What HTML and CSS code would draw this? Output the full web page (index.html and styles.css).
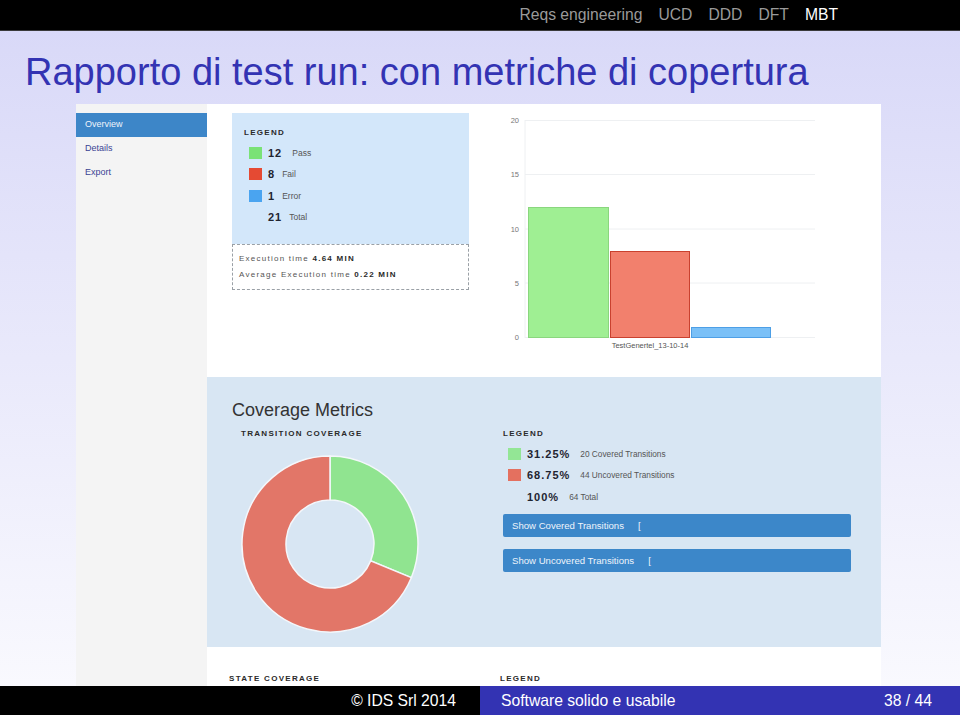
FILE: index.html
```html
<!DOCTYPE html>
<html lang="it">
<head>
<meta charset="utf-8">
<title>Rapporto di test run</title>
<link rel="stylesheet" href="styles.css">
</head>
<body>
<div class="slide">
  <header class="topbar">
    <nav class="sections">
      <span class="sec">Reqs engineering</span>
      <span class="sec">UCD</span>
      <span class="sec">DDD</span>
      <span class="sec">DFT</span>
      <span class="sec current">MBT</span>
    </nav>
  </header>

  <main class="frame">
    <h1 class="frametitle">Rapporto di test run: con metriche di copertura</h1>

    <div class="shot">
      <aside class="sidebar">
        <a class="nav active">Overview</a>
        <a class="nav">Details</a>
        <a class="nav">Export</a>
      </aside>

      <section class="report">
        <div class="summary">
          <div class="summary-left">
            <div class="legend-box">
              <div class="caps">LEGEND</div>
              <ul class="legend">
                <li><span class="sw pass"></span><b class="num">12</b><span class="lbl wide">Pass</span></li>
                <li><span class="sw fail"></span><b class="num">8</b><span class="lbl">Fail</span></li>
                <li><span class="sw error"></span><b class="num">1</b><span class="lbl">Error</span></li>
                <li><span class="sw none"></span><b class="num">21</b><span class="lbl">Total</span></li>
              </ul>
            </div>
            <div class="exec">
              <p>Execution time <b>4.64 MIN</b></p>
              <p>Average Execution time <b>0.22 MIN</b></p>
            </div>
          </div>

          <svg class="bar-chart" width="412" height="273" viewBox="0 0 412 273">
            <g class="grid">
              <line x1="56" y1="16.5" x2="346" y2="16.5"/>
              <line x1="56" y1="70.5" x2="346" y2="70.5"/>
              <line x1="56" y1="125" x2="346" y2="125"/>
              <line x1="56" y1="179" x2="346" y2="179"/>
              <line x1="56" y1="233.5" x2="346" y2="233.5"/>
              <line x1="56" y1="16" x2="56" y2="234"/>
            </g>
            <g class="ticks">
              <text x="50" y="19">20</text>
              <text x="50" y="73">15</text>
              <text x="50" y="128">10</text>
              <text x="50" y="182">5</text>
              <text x="50" y="236">0</text>
            </g>
            <rect x="59.5" y="103.5" width="80" height="130" fill="#9fef93" stroke="#8ad67e"/>
            <rect x="141.5" y="147.5" width="79" height="86" fill="#f2806d" stroke="#c9412f"/>
            <rect x="222.5" y="223.5" width="79" height="10" fill="#7ac0f7" stroke="#4d9fe6"/>
            <text class="xlabel" x="181" y="244">TestGenertel_13-10-14</text>
          </svg>
        </div>

        <div class="coverage">
          <h2 class="cov-title">Coverage Metrics</h2>
          <div class="cov-cols">
            <div class="cov-chart">
              <div class="caps">TRANSITION COVERAGE</div>
              <svg class="donut" width="180" height="180" viewBox="0 0 180 180">
                <path d="M90 2 A88 88 0 0 1 171.3 123.68 L130.65 106.84 A44 44 0 0 0 90 46 Z" fill="#90e490" stroke="#f4f7fb" stroke-width="1.5"/>
                <path d="M171.3 123.68 A88 88 0 1 1 90 2 L90 46 A44 44 0 1 0 130.65 106.84 Z" fill="#e27668" stroke="#f4f7fb" stroke-width="1.5"/>
              </svg>
            </div>
            <div class="cov-legend">
              <div class="caps">LEGEND</div>
              <ul class="legend pct">
                <li><span class="sw covered"></span><b class="num">31.25%</b><span class="lbl">20 Covered Transitions</span></li>
                <li><span class="sw uncovered"></span><b class="num">68.75%</b><span class="lbl">44 Uncovered Transitions</span></li>
                <li><span class="sw none"></span><b class="num">100%</b><span class="lbl">64 Total</span></li>
              </ul>
              <button class="toggle">Show Covered Transitions<span class="brk">[</span></button>
              <button class="toggle">Show Uncovered Transitions<span class="brk">[</span></button>
            </div>
          </div>
        </div>

        <div class="state">
          <div class="caps state-label">STATE COVERAGE</div>
          <div class="caps">LEGEND</div>
        </div>
      </section>
    </div>
  </main>

  <footer class="footline">
    <div class="foot-left">&copy; IDS Srl 2014</div>
    <div class="foot-right"><span>Software solido e usabile</span><span class="pages">38 / 44</span></div>
  </footer>
</div>
</body>
</html>
```

FILE: styles.css
```css
* { box-sizing: border-box; }

html, body {
  margin: 0;
  padding: 0;
  width: 960px;
  height: 715px;
  overflow: hidden;
  font-family: "Liberation Sans", Arial, sans-serif;
}

.slide {
  width: 960px;
  height: 715px;
  display: flex;
  flex-direction: column;
}

/* ---------- top navigation bar ---------- */
.topbar {
  height: 31px;
  background: #000;
  border-bottom: 1px solid #3a3a3a;
  display: flex;
  justify-content: flex-end;
  padding-right: 122px;
}
.sections {
  display: flex;
  gap: 16px;
  align-items: center;
  font-size: 15.7px;
}
.sec { color: #9a9a9a; }
.sec.current { color: #fff; }

/* ---------- frame ---------- */
.frame {
  flex: 1;
  min-height: 0;
  display: flex;
  flex-direction: column;
  background: linear-gradient(to bottom, #d9d9f8 0%, #f9f9fe 100%);
}
.frametitle {
  margin: 0;
  padding: 19px 0 10px 25px;
  font-size: 38px;
  line-height: 44px;
  font-weight: normal;
  color: #3333b3;
}

.shot {
  flex: 1;
  min-height: 0;
  margin-left: 76px;
  width: 805px;
  display: flex;
  overflow: hidden;
}

/* ---------- sidebar ---------- */
.sidebar {
  width: 131px;
  flex: none;
  background: #f4f4f4;
  padding-top: 9px;
  display: flex;
  flex-direction: column;
}
.nav {
  height: 24px;
  line-height: 23px;
  padding-left: 9px;
  font-size: 9px;
  color: #3b4494;
}
.nav.active {
  background: #3d86c8;
  color: #eef4fb;
}

/* ---------- report ---------- */
.report {
  width: 674px;
  flex: none;
  background: #fff;
  display: flex;
  flex-direction: column;
}

.caps {
  font-size: 8px;
  font-weight: bold;
  letter-spacing: 1.3px;
  color: #2a2a2a;
  line-height: 12px;
}

.summary {
  height: 273px;
  flex: none;
  display: flex;
}
.summary-left {
  margin-left: 25px;
  width: 237px;
  padding-top: 9px;
}
.legend-box {
  height: 131px;
  background: #d3e7fa;
  padding: 14px 0 0 12px;
}

.legend {
  list-style: none;
  margin: 0;
  padding: 0;
}
.legend li {
  display: flex;
  align-items: center;
  height: 21.5px;
}
.legend-box .legend { margin-top: 3px; padding-left: 5px; }
.sw {
  width: 13px;
  height: 12px;
  flex: none;
  margin-right: 6px;
}
.sw.pass { background: #7ae276; }
.sw.fail { background: #e54a33; }
.sw.error { background: #4aa4f0; }
.sw.none { background: transparent; }
.sw.covered { background: #93e695; }
.sw.uncovered { background: #e4705f; }

.num {
  font-size: 11px;
  letter-spacing: 1px;
  color: #1f2430;
}
.lbl {
  font-size: 8.5px;
  color: #555;
  margin-left: 7px;
}
.lbl.wide { margin-left: 10px; }

.exec {
  height: 46px;
  border: 1px dashed #9aa0a6;
  padding: 6px 0 0 6px;
}
.exec p {
  margin: 0;
  font-size: 8px;
  line-height: 16px;
  letter-spacing: 1.25px;
  color: #555;
}
.exec b { color: #2a2a2a; }

.bar-chart { display: block; flex: none; }
.grid line { stroke: #eef0f2; stroke-width: 1; }
.ticks text {
  font-size: 7.5px;
  fill: #777;
  text-anchor: end;
  font-family: "Liberation Sans", Arial, sans-serif;
}
.xlabel {
  font-size: 7.5px;
  fill: #555;
  text-anchor: middle;
  font-family: "Liberation Sans", Arial, sans-serif;
}

/* ---------- coverage ---------- */
.coverage {
  height: 270px;
  flex: none;
  background: #d8e6f3;
  padding-top: 22px;
}
.cov-title {
  margin: 0 0 0 25px;
  font-size: 18px;
  line-height: 22px;
  font-weight: normal;
  color: #333;
}
.cov-cols {
  display: flex;
  margin-top: 7px;
}
.cov-chart {
  margin-left: 34px;
  width: 262px;
}
.donut {
  display: block;
  margin: 14px 0 0 -1px;
}
.cov-legend {
  width: 348px;
}
.cov-legend .legend { margin-top: 3px; padding-left: 5px; }
.legend.pct .lbl { margin-left: 10px; font-size: 8.3px; }

.toggle {
  display: flex;
  align-items: center;
  width: 348px;
  height: 23px;
  margin-top: 6px;
  padding: 0 0 0 9px;
  border: none;
  border-radius: 2px;
  background: #3c87c9;
  color: #eef4fb;
  font-family: "Liberation Sans", Arial, sans-serif;
  font-size: 9.6px;
  text-align: left;
}
.toggle + .toggle { margin-top: 12px; }
.brk { margin-left: 14px; }

/* ---------- state coverage ---------- */
.state {
  flex: 1;
  display: flex;
  padding: 26px 0 0 22px;
}
.state-label { width: 271px; }

/* ---------- footline ---------- */
.footline {
  height: 29px;
  flex: none;
  display: flex;
  color: #fff;
  font-size: 15.7px;
}
.foot-left {
  width: 480px;
  background: #000;
  display: flex;
  align-items: center;
  justify-content: flex-end;
  padding-right: 24px;
}
.foot-right {
  width: 480px;
  background: #3333b3;
  display: flex;
  align-items: center;
  justify-content: space-between;
  padding: 0 28px 0 21px;
}
```
